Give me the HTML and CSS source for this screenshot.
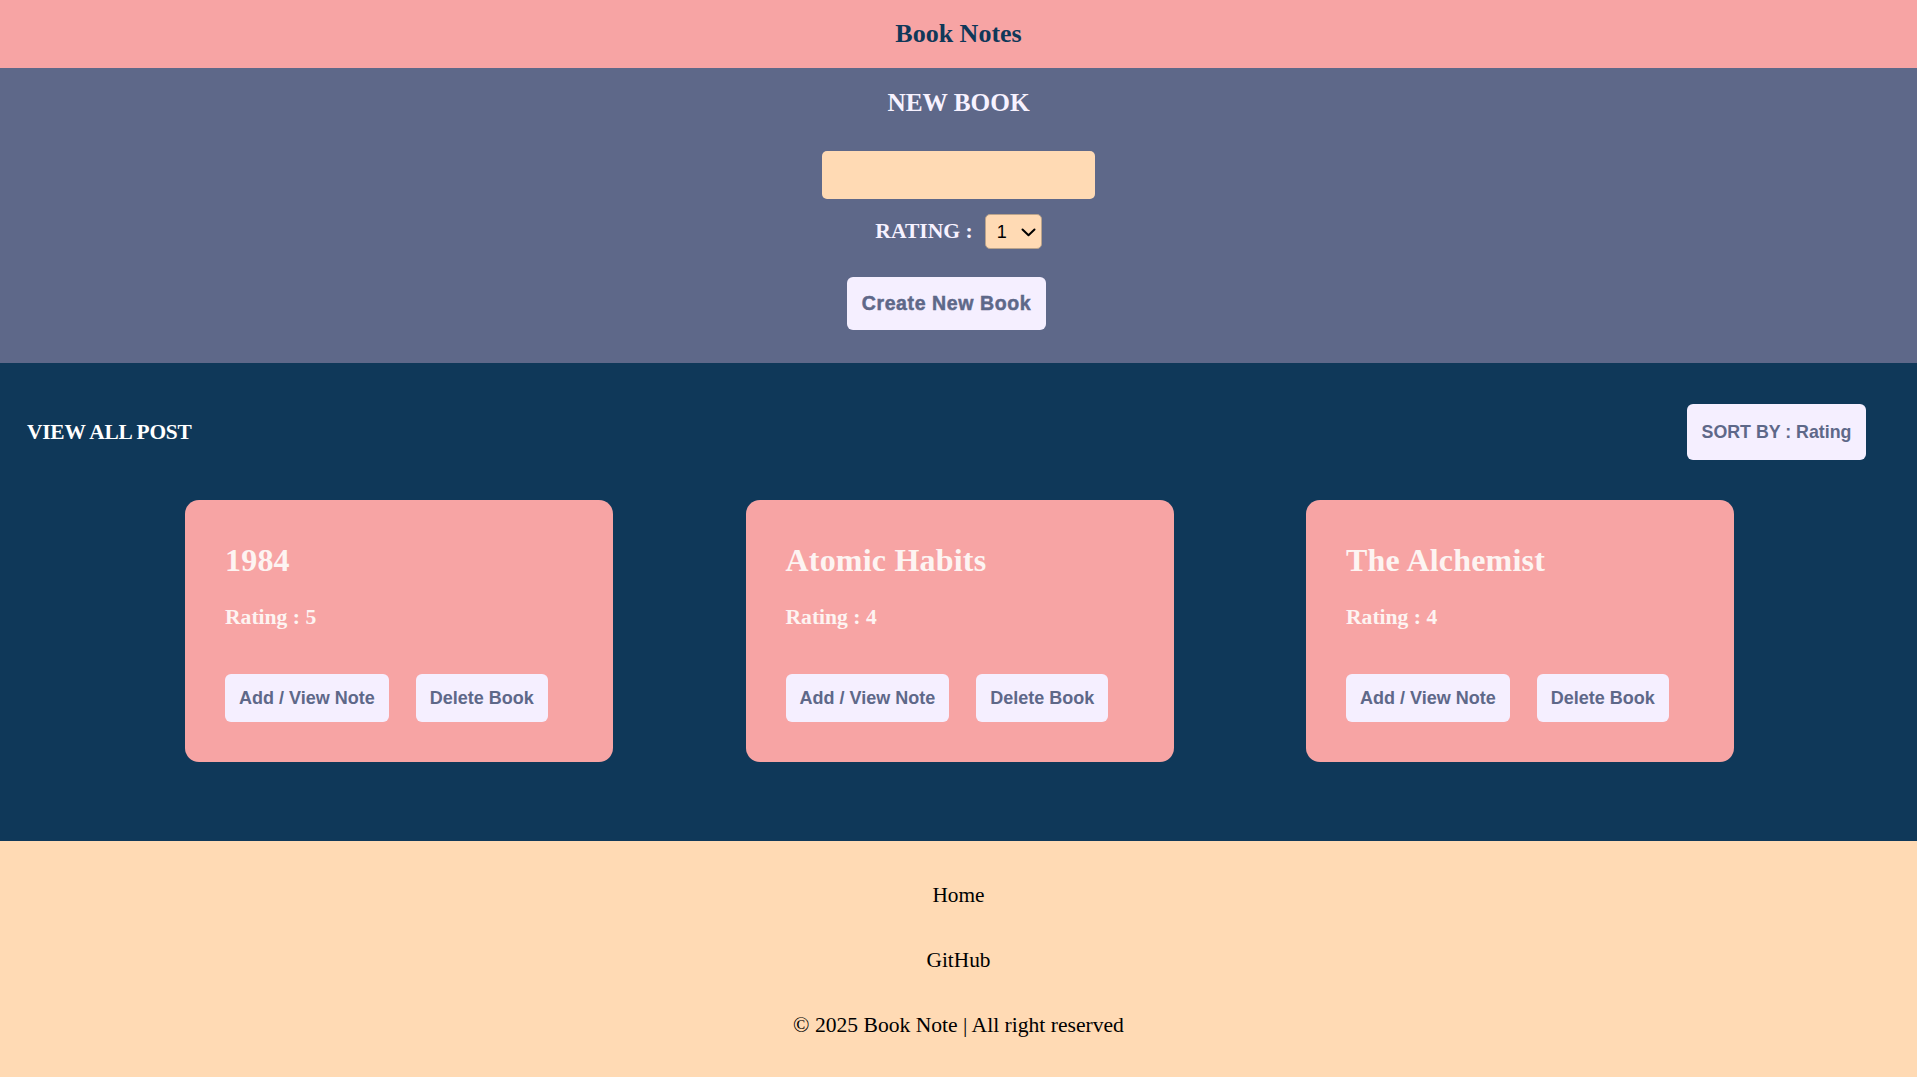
FILE: index.html
```html
<!DOCTYPE html>
<html lang="en">
<head>
<meta charset="utf-8">
<title>Book Notes</title>
<link rel="stylesheet" href="styles.css">
</head>
<body>
<header class="site-header">
  <h1 class="brand">Book Notes</h1>
</header>

<section class="new-book">
  <h2 class="new-title">NEW BOOK</h2>
  <input class="title-input" type="text" aria-label="Book title">
  <div class="rating-row">
    <label class="rating-label" for="rating">RATING :</label>
    <div class="select-wrap">
      <select id="rating" class="rating-select">
        <option>1</option><option>2</option><option>3</option><option>4</option><option>5</option>
      </select>
      <svg class="chevron" width="15" height="9" viewBox="0 0 15 9"><path d="M1.5 1.5 L7.5 7.3 L13.5 1.5" fill="none" stroke="#000" stroke-width="2" stroke-linecap="round" stroke-linejoin="round"/></svg>
    </div>
  </div>
  <button class="create-btn">Create New Book</button>
</section>

<section class="posts">
  <div class="posts-bar">
    <h3 class="posts-title">VIEW ALL POST</h3>
    <button class="btn sort-btn">SORT BY : Rating</button>
  </div>
  <div class="cards">
    <article class="card">
      <h2 class="card-title">1984</h2>
      <p class="card-rating">Rating : 5</p>
      <div class="card-actions">
        <button class="btn">Add / View Note</button>
        <button class="btn">Delete Book</button>
      </div>
    </article>
    <article class="card">
      <h2 class="card-title">Atomic Habits</h2>
      <p class="card-rating">Rating : 4</p>
      <div class="card-actions">
        <button class="btn">Add / View Note</button>
        <button class="btn">Delete Book</button>
      </div>
    </article>
    <article class="card">
      <h2 class="card-title">The Alchemist</h2>
      <p class="card-rating">Rating : 4</p>
      <div class="card-actions">
        <button class="btn">Add / View Note</button>
        <button class="btn">Delete Book</button>
      </div>
    </article>
  </div>
</section>

<footer class="site-footer">
  <a class="foot-link" href="#">Home</a>
  <a class="foot-link" href="#">GitHub</a>
  <p class="copy">© 2025 Book Note | All right reserved</p>
</footer>
</body>
</html>
```
FILE: styles.css
```css
* { box-sizing: border-box; }
html, body { margin: 0; padding: 0; }
body {
  font-family: "Liberation Serif", "Times New Roman", serif;
  background: #FFDAB4;
}

.site-header {
  height: 68px;
  background: #F7A4A4;
  display: flex;
  align-items: center;
  justify-content: center;
}
.brand {
  margin: 0;
  font-size: 26px;
  font-weight: bold;
  color: #0F3859;
}

.new-book {
  background: #5E6889;
  display: flex;
  flex-direction: column;
  align-items: center;
  padding: 20px 0 33px;
}
.new-title {
  margin: 0;
  font-size: 25.3px;
  color: #F7F2FF;
  line-height: 29px;
}
.title-input {
  margin-top: 34px;
  width: 273px;
  height: 48px;
  border: none;
  border-radius: 5px;
  background: #FFDAB4;
  font-size: 18px;
  padding: 0 12px;
}
.rating-row {
  margin-top: 15px;
  display: flex;
  align-items: center;
  gap: 12px;
  height: 35px;
}
.rating-label {
  font-size: 21.6px;
  font-weight: bold;
  color: #F7F2FF;
}
.select-wrap {
  position: relative;
  width: 57px;
  height: 35px;
}
.rating-select {
  appearance: none;
  -webkit-appearance: none;
  width: 57px;
  height: 35px;
  background: #FFDAB4;
  border: 1px solid #B9A38C;
  border-radius: 5px;
  font-family: "Liberation Sans", Arial, sans-serif;
  font-size: 18px;
  color: #000;
  padding: 0 0 0 11px;
}
.chevron {
  position: absolute;
  right: 6px;
  top: 14px;
  pointer-events: none;
}
.create-btn {
  margin-top: 28px;
  margin-right: 24px;
  width: 199px;
  height: 53px;
  border: none;
  border-radius: 6px;
  background: #F5EFFF;
  color: #5E6889;
  font-family: "Liberation Sans", Arial, sans-serif;
  font-weight: bold;
  font-size: 19.5px;
  letter-spacing: 0.6px;
  -webkit-text-stroke: 0.5px #5E6889;
  padding: 0;
}

.posts {
  background: #0F3859;
  padding: 41px 0 79px;
}
.posts-bar {
  display: flex;
  align-items: center;
  justify-content: space-between;
  padding: 0 51px 0 27px;
}
.posts-title {
  margin: 0;
  font-size: 21.4px;
  font-weight: bold;
  letter-spacing: -0.2px;
  color: #FFFFFF;
}
.btn {
  border: none;
  border-radius: 6px;
  background: #F5EFFF;
  color: #5E6889;
  font-family: "Liberation Sans", Arial, sans-serif;
  font-weight: bold;
  font-size: 18px;
  line-height: 20px;
  padding: 14px;
}
.sort-btn {
  height: 56px;
  width: 179px;
  padding: 0;
  font-size: 17.8px;
}
.cards {
  margin-top: 40px;
  display: flex;
  justify-content: center;
  gap: 132.5px;
  padding-left: 2px;
}
.card {
  width: 428px;
  background: #F7A4A4;
  border-radius: 14px;
  padding: 42px 40px 40px;
}
.card-title {
  margin: 0;
  font-size: 32px;
  line-height: 37px;
  font-weight: bold;
  letter-spacing: 0.2px;
  color: #FDF4F2;
}
.card-rating {
  margin: 26px 0 0;
  font-size: 21.6px;
  line-height: 25px;
  font-weight: bold;
  color: #FDF4F2;
}
.card-actions {
  margin-top: 44px;
  display: flex;
  gap: 27px;
}

.site-footer {
  background: #FFDAB4;
  display: flex;
  flex-direction: column;
  align-items: center;
  gap: 41px;
  padding: 42px 0 42px;
}
.foot-link {
  font-size: 21.3px;
  line-height: 24px;
  color: #000;
  text-decoration: none;
}
.copy {
  margin: 0;
  font-size: 21.6px;
  line-height: 24px;
  color: #000;
}
```
